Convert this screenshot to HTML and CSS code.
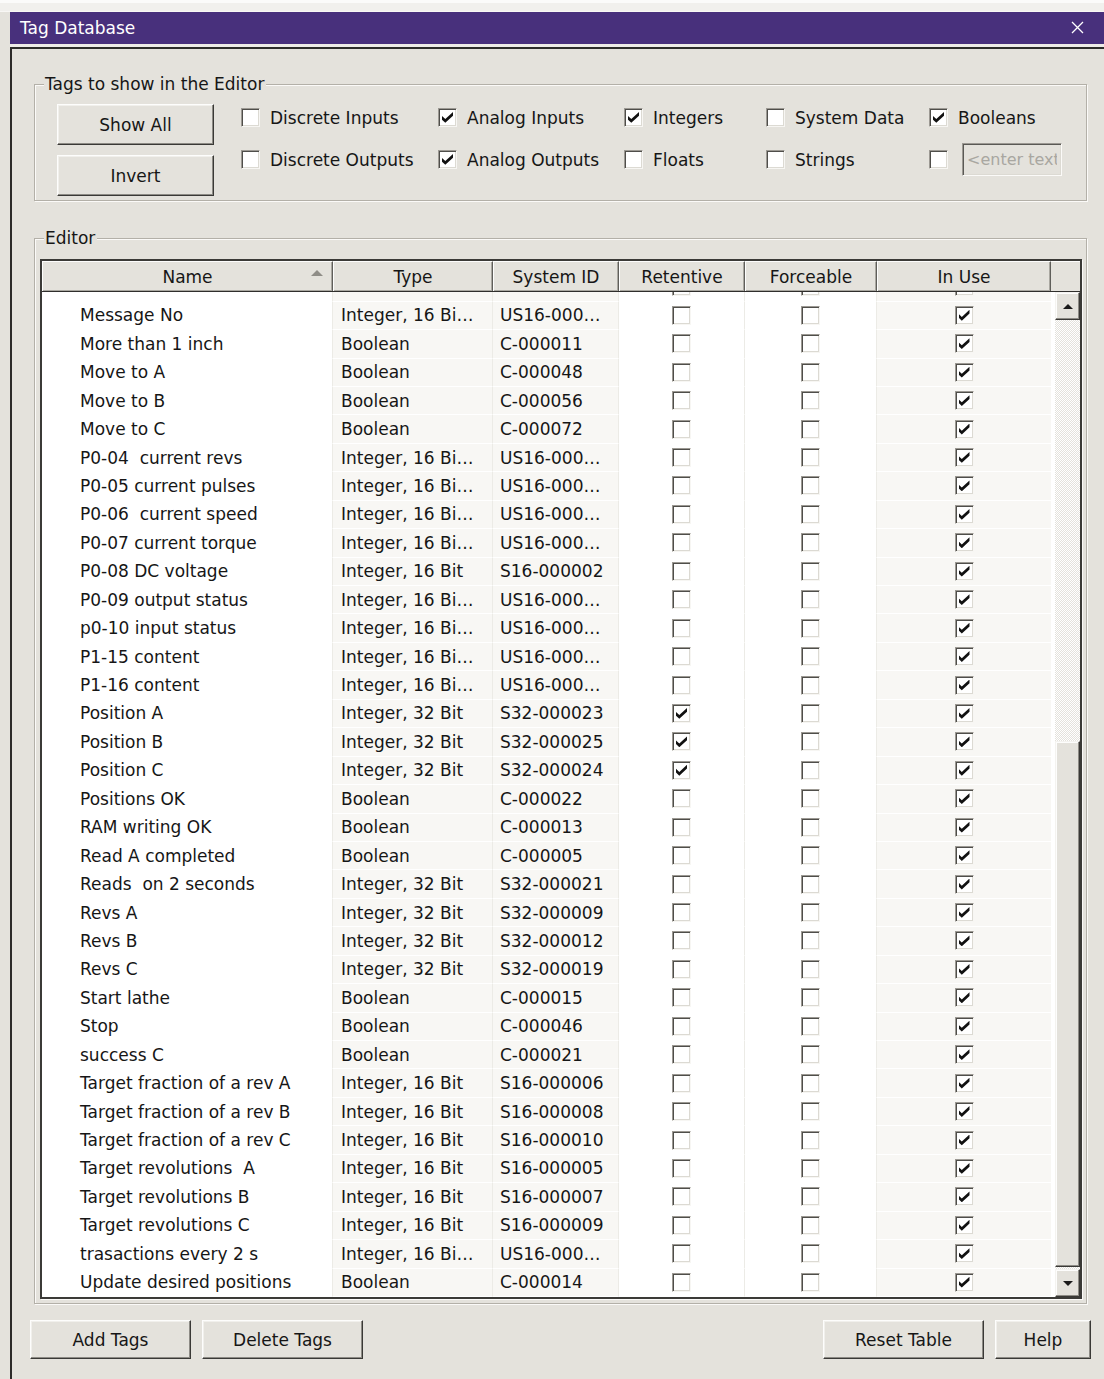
FILE: index.html
```html
<!DOCTYPE html>
<html lang="en">
<head>
<meta charset="utf-8">
<title>Tag Database</title>
<link rel="stylesheet" href="styles.css">
</head>
<body>
<div class="top-strip"></div>
<div class="window">
  <div class="titlebar">
    <span class="title">Tag Database</span>
    <svg class="close" width="13" height="13" viewBox="0 0 13 13"><path d="M1 1 L12 12 M12 1 L1 12" stroke="#fff" stroke-width="1.3" fill="none"/></svg>
  </div>
  <div class="client">
    <fieldset class="group tags">
      <legend>Tags to show in the Editor</legend>
      <div class="tags-body">
        <div class="btn-col">
          <button class="btn wide">Show All</button>
          <button class="btn wide">Invert</button>
        </div>
        <div class="check-grid">
          <label class="chk"><i class="cb"></i>Discrete Inputs</label>
          <label class="chk"><i class="cb on"></i>Analog Inputs</label>
          <label class="chk"><i class="cb on"></i>Integers</label>
          <label class="chk"><i class="cb"></i>System Data</label>
          <label class="chk"><i class="cb on"></i>Booleans</label>
          <label class="chk"><i class="cb"></i>Discrete Outputs</label>
          <label class="chk"><i class="cb on"></i>Analog Outputs</label>
          <label class="chk"><i class="cb"></i>Floats</label>
          <label class="chk"><i class="cb"></i>Strings</label>
          <label class="chk"><i class="cb"></i><input class="filter" type="text" placeholder="&lt;enter text&gt;"></label>
        </div>
      </div>
    </fieldset>

    <fieldset class="group editor">
      <legend>Editor</legend>
      <div class="grid">
        <div class="grid-head">
          <div class="hc sorted">Name<span class="sort-arrow"></span></div>
          <div class="hc">Type</div>
          <div class="hc">System ID</div>
          <div class="hc">Retentive</div>
          <div class="hc">Forceable</div>
          <div class="hc">In Use</div>
          <div class="hc filler"></div>
        </div>
        <div class="grid-body">
          <div class="rows">
            <div class="row"><span class="c name"></span><span class="c type"></span><span class="c sid"></span><span class="c ret"><i class="cb"></i></span><span class="c frc"><i class="cb"></i></span><span class="c use"><i class="cb on"></i></span></div>
            <div class="row"><span class="c name">Message No</span><span class="c type">Integer, 16 Bi…</span><span class="c sid">US16-000…</span><span class="c ret"><i class="cb"></i></span><span class="c frc"><i class="cb"></i></span><span class="c use"><i class="cb on"></i></span></div>
            <div class="row"><span class="c name">More than 1 inch</span><span class="c type">Boolean</span><span class="c sid">C-000011</span><span class="c ret"><i class="cb"></i></span><span class="c frc"><i class="cb"></i></span><span class="c use"><i class="cb on"></i></span></div>
            <div class="row"><span class="c name">Move to A</span><span class="c type">Boolean</span><span class="c sid">C-000048</span><span class="c ret"><i class="cb"></i></span><span class="c frc"><i class="cb"></i></span><span class="c use"><i class="cb on"></i></span></div>
            <div class="row"><span class="c name">Move to B</span><span class="c type">Boolean</span><span class="c sid">C-000056</span><span class="c ret"><i class="cb"></i></span><span class="c frc"><i class="cb"></i></span><span class="c use"><i class="cb on"></i></span></div>
            <div class="row"><span class="c name">Move to C</span><span class="c type">Boolean</span><span class="c sid">C-000072</span><span class="c ret"><i class="cb"></i></span><span class="c frc"><i class="cb"></i></span><span class="c use"><i class="cb on"></i></span></div>
            <div class="row"><span class="c name">P0-04  current revs</span><span class="c type">Integer, 16 Bi…</span><span class="c sid">US16-000…</span><span class="c ret"><i class="cb"></i></span><span class="c frc"><i class="cb"></i></span><span class="c use"><i class="cb on"></i></span></div>
            <div class="row"><span class="c name">P0-05 current pulses</span><span class="c type">Integer, 16 Bi…</span><span class="c sid">US16-000…</span><span class="c ret"><i class="cb"></i></span><span class="c frc"><i class="cb"></i></span><span class="c use"><i class="cb on"></i></span></div>
            <div class="row"><span class="c name">P0-06  current speed</span><span class="c type">Integer, 16 Bi…</span><span class="c sid">US16-000…</span><span class="c ret"><i class="cb"></i></span><span class="c frc"><i class="cb"></i></span><span class="c use"><i class="cb on"></i></span></div>
            <div class="row"><span class="c name">P0-07 current torque</span><span class="c type">Integer, 16 Bi…</span><span class="c sid">US16-000…</span><span class="c ret"><i class="cb"></i></span><span class="c frc"><i class="cb"></i></span><span class="c use"><i class="cb on"></i></span></div>
            <div class="row"><span class="c name">P0-08 DC voltage</span><span class="c type">Integer, 16 Bit</span><span class="c sid">S16-000002</span><span class="c ret"><i class="cb"></i></span><span class="c frc"><i class="cb"></i></span><span class="c use"><i class="cb on"></i></span></div>
            <div class="row"><span class="c name">P0-09 output status</span><span class="c type">Integer, 16 Bi…</span><span class="c sid">US16-000…</span><span class="c ret"><i class="cb"></i></span><span class="c frc"><i class="cb"></i></span><span class="c use"><i class="cb on"></i></span></div>
            <div class="row"><span class="c name">p0-10 input status</span><span class="c type">Integer, 16 Bi…</span><span class="c sid">US16-000…</span><span class="c ret"><i class="cb"></i></span><span class="c frc"><i class="cb"></i></span><span class="c use"><i class="cb on"></i></span></div>
            <div class="row"><span class="c name">P1-15 content</span><span class="c type">Integer, 16 Bi…</span><span class="c sid">US16-000…</span><span class="c ret"><i class="cb"></i></span><span class="c frc"><i class="cb"></i></span><span class="c use"><i class="cb on"></i></span></div>
            <div class="row"><span class="c name">P1-16 content</span><span class="c type">Integer, 16 Bi…</span><span class="c sid">US16-000…</span><span class="c ret"><i class="cb"></i></span><span class="c frc"><i class="cb"></i></span><span class="c use"><i class="cb on"></i></span></div>
            <div class="row"><span class="c name">Position A</span><span class="c type">Integer, 32 Bit</span><span class="c sid">S32-000023</span><span class="c ret"><i class="cb on"></i></span><span class="c frc"><i class="cb"></i></span><span class="c use"><i class="cb on"></i></span></div>
            <div class="row"><span class="c name">Position B</span><span class="c type">Integer, 32 Bit</span><span class="c sid">S32-000025</span><span class="c ret"><i class="cb on"></i></span><span class="c frc"><i class="cb"></i></span><span class="c use"><i class="cb on"></i></span></div>
            <div class="row"><span class="c name">Position C</span><span class="c type">Integer, 32 Bit</span><span class="c sid">S32-000024</span><span class="c ret"><i class="cb on"></i></span><span class="c frc"><i class="cb"></i></span><span class="c use"><i class="cb on"></i></span></div>
            <div class="row"><span class="c name">Positions OK</span><span class="c type">Boolean</span><span class="c sid">C-000022</span><span class="c ret"><i class="cb"></i></span><span class="c frc"><i class="cb"></i></span><span class="c use"><i class="cb on"></i></span></div>
            <div class="row"><span class="c name">RAM writing OK</span><span class="c type">Boolean</span><span class="c sid">C-000013</span><span class="c ret"><i class="cb"></i></span><span class="c frc"><i class="cb"></i></span><span class="c use"><i class="cb on"></i></span></div>
            <div class="row"><span class="c name">Read A completed</span><span class="c type">Boolean</span><span class="c sid">C-000005</span><span class="c ret"><i class="cb"></i></span><span class="c frc"><i class="cb"></i></span><span class="c use"><i class="cb on"></i></span></div>
            <div class="row"><span class="c name">Reads  on 2 seconds</span><span class="c type">Integer, 32 Bit</span><span class="c sid">S32-000021</span><span class="c ret"><i class="cb"></i></span><span class="c frc"><i class="cb"></i></span><span class="c use"><i class="cb on"></i></span></div>
            <div class="row"><span class="c name">Revs A</span><span class="c type">Integer, 32 Bit</span><span class="c sid">S32-000009</span><span class="c ret"><i class="cb"></i></span><span class="c frc"><i class="cb"></i></span><span class="c use"><i class="cb on"></i></span></div>
            <div class="row"><span class="c name">Revs B</span><span class="c type">Integer, 32 Bit</span><span class="c sid">S32-000012</span><span class="c ret"><i class="cb"></i></span><span class="c frc"><i class="cb"></i></span><span class="c use"><i class="cb on"></i></span></div>
            <div class="row"><span class="c name">Revs C</span><span class="c type">Integer, 32 Bit</span><span class="c sid">S32-000019</span><span class="c ret"><i class="cb"></i></span><span class="c frc"><i class="cb"></i></span><span class="c use"><i class="cb on"></i></span></div>
            <div class="row"><span class="c name">Start lathe</span><span class="c type">Boolean</span><span class="c sid">C-000015</span><span class="c ret"><i class="cb"></i></span><span class="c frc"><i class="cb"></i></span><span class="c use"><i class="cb on"></i></span></div>
            <div class="row"><span class="c name">Stop</span><span class="c type">Boolean</span><span class="c sid">C-000046</span><span class="c ret"><i class="cb"></i></span><span class="c frc"><i class="cb"></i></span><span class="c use"><i class="cb on"></i></span></div>
            <div class="row"><span class="c name">success C</span><span class="c type">Boolean</span><span class="c sid">C-000021</span><span class="c ret"><i class="cb"></i></span><span class="c frc"><i class="cb"></i></span><span class="c use"><i class="cb on"></i></span></div>
            <div class="row"><span class="c name">Target fraction of a rev A</span><span class="c type">Integer, 16 Bit</span><span class="c sid">S16-000006</span><span class="c ret"><i class="cb"></i></span><span class="c frc"><i class="cb"></i></span><span class="c use"><i class="cb on"></i></span></div>
            <div class="row"><span class="c name">Target fraction of a rev B</span><span class="c type">Integer, 16 Bit</span><span class="c sid">S16-000008</span><span class="c ret"><i class="cb"></i></span><span class="c frc"><i class="cb"></i></span><span class="c use"><i class="cb on"></i></span></div>
            <div class="row"><span class="c name">Target fraction of a rev C</span><span class="c type">Integer, 16 Bit</span><span class="c sid">S16-000010</span><span class="c ret"><i class="cb"></i></span><span class="c frc"><i class="cb"></i></span><span class="c use"><i class="cb on"></i></span></div>
            <div class="row"><span class="c name">Target revolutions  A</span><span class="c type">Integer, 16 Bit</span><span class="c sid">S16-000005</span><span class="c ret"><i class="cb"></i></span><span class="c frc"><i class="cb"></i></span><span class="c use"><i class="cb on"></i></span></div>
            <div class="row"><span class="c name">Target revolutions B</span><span class="c type">Integer, 16 Bit</span><span class="c sid">S16-000007</span><span class="c ret"><i class="cb"></i></span><span class="c frc"><i class="cb"></i></span><span class="c use"><i class="cb on"></i></span></div>
            <div class="row"><span class="c name">Target revolutions C</span><span class="c type">Integer, 16 Bit</span><span class="c sid">S16-000009</span><span class="c ret"><i class="cb"></i></span><span class="c frc"><i class="cb"></i></span><span class="c use"><i class="cb on"></i></span></div>
            <div class="row"><span class="c name">trasactions every 2 s</span><span class="c type">Integer, 16 Bi…</span><span class="c sid">US16-000…</span><span class="c ret"><i class="cb"></i></span><span class="c frc"><i class="cb"></i></span><span class="c use"><i class="cb on"></i></span></div>
            <div class="row"><span class="c name">Update desired positions</span><span class="c type">Boolean</span><span class="c sid">C-000014</span><span class="c ret"><i class="cb"></i></span><span class="c frc"><i class="cb"></i></span><span class="c use"><i class="cb on"></i></span></div>
          </div>
          <div class="vscroll">
            <div class="sb-btn"><span class="arrow up"></span></div>
            <div class="sb-track top"></div>
            <div class="sb-thumb"></div>
            <div class="sb-track bottom"></div>
            <div class="sb-btn"><span class="arrow down"></span></div>
          </div>
        </div>
      </div>
    </fieldset>

    <div class="footer">
      <div class="btn-row">
        <button class="btn mid">Add Tags</button>
        <button class="btn mid">Delete Tags</button>
      </div>
      <div class="btn-row">
        <button class="btn mid">Reset Table</button>
        <button class="btn small">Help</button>
      </div>
    </div>
  </div>
</div>
</body>
</html>
```

FILE: styles.css
```css
:root {
  --face: #e4e2dc;
  --dark: #3b3a37;
  --row: 28.44px;
}

* { box-sizing: border-box; }

html, body {
  margin: 0;
  height: 100%;
  overflow: hidden;
}

body {
  background: var(--face);
  font-family: "DejaVu Sans", sans-serif;
  font-size: 17px;
  color: #161616;
}

/* strip of desktop above the window */
.top-strip {
  height: 12px;
  background: #f1f0ed;
  border-top: 3px solid #fbfbfa;
  border-bottom: 1px solid #f8f7f5;
}

.window {
  margin-left: 10px;
  height: calc(100% - 12px);
  display: flex;
  flex-direction: column;
}

.titlebar {
  height: 35px;
  background: #48307c;
  border-bottom: 3px solid #eeece8;
  display: flex;
  align-items: center;
  justify-content: space-between;
  padding: 0 20px 1px 10px;
  flex: none;
}

.title {
  color: #fff;
}

.close { display: block; }

.client {
  flex: 1;
  border-left: 2px solid #2c2b29;
  border-top: 2px solid #2c2b29;
  padding: 25px 17px 0 22px;
}

/* group boxes */
.group {
  margin: 0;
  padding: 0;
  border: 1px solid #b3b0a8;
  box-shadow: 1px 1px 0 #fbfaf8, inset 1px 1px 0 #fbfaf8;
  min-width: 0;
}

.group legend {
  padding: 0 2px 0 1px;
  line-height: 20px;
  background: var(--face);
}

.tags { padding: 10px 0 4px 0; }
.tags legend { margin-left: 9px; }

.tags-body {
  display: flex;
  align-items: flex-start;
  padding-left: 22px;
}

.btn-col {
  display: flex;
  flex-direction: column;
  gap: 10px;
}

.check-grid {
  margin-left: 27px;
  margin-top: -3px;
  display: grid;
  grid-template-columns: 197px 186px 142px 163px auto;
  grid-template-rows: 33px 33px;
  row-gap: 9px;
}

.chk {
  display: flex;
  align-items: center;
  gap: 10px;
  white-space: nowrap;
}

/* classic sunken check box */
.cb {
  position: relative;
  display: inline-block;
  width: 19px;
  height: 19px;
  flex: none;
  background: #fff;
  border: 1px solid;
  border-color: #9c9993 #f7f6f3 #f7f6f3 #9c9993;
  box-shadow: inset 1px 1px 0 #4f4e4a, inset -1px -1px 0 #dcdad3;
}

/* chunky tick in the classic style */
.cb.on::after {
  content: "";
  position: absolute;
  left: 3px;
  top: 3px;
  width: 11px;
  height: 11px;
  background: #111;
  clip-path: polygon(0 36%, 30% 64%, 100% 0, 100% 34%, 30% 98%, 0 70%);
}

.filter {
  width: 100px;
  height: 33px;
  margin-left: 4px;
  font: inherit;
  font-size: 16px;
  padding: 0 4px;
  background: var(--face);
  border: 1px solid;
  border-color: #9c9993 #fbfaf8 #fbfaf8 #9c9993;
  box-shadow: inset 1px 1px 0 #5a5955, inset -1px -1px 0 #dcdad3;
  outline: none;
  color: #161616;
}

.filter::placeholder { color: #a9a7a1; }

/* raised push buttons */
.btn {
  font: inherit;
  color: #161616;
  background: var(--face);
  border: 1px solid;
  border-color: #fdfdfc #3a3936 #3a3936 #fdfdfc;
  box-shadow: inset -1px -1px 0 #8d8b85, inset 1px 1px 0 #f1f0ec;
  padding: 0;
  height: 40px;
}

.btn.wide { width: 157px; height: 41px; }
.btn.mid { width: 161px; height: 39px; }
.btn.small { width: 96px; height: 39px; }

/* editor */
.editor {
  margin-top: 27px;
  padding: 11px 4px 4px 5px;
}

.editor legend { margin-left: 4px; }

.grid {
  border: 2px solid var(--dark);
  box-shadow: 1px 1px 0 #fbfaf8;
  background: #fff;
}

.grid-head {
  display: grid;
  grid-template-columns: 291px 160px 126px 126px 132px 174px 1fr;
  height: 31px;
  background: var(--face);
  border-bottom: 1px solid #2f2e2c;
}

.hc {
  position: relative;
  display: flex;
  align-items: center;
  justify-content: center;
  border-top: 1px solid #fdfdfc;
  border-left: 1px solid #fdfdfc;
  border-right: 1px solid #5f5e5a;
  box-shadow: inset -1px -1px 0 #a9a7a0;
}

.hc.filler {
  border: 0;
  box-shadow: none;
  border-top: 1px solid #fdfdfc;
}

.sort-arrow {
  position: absolute;
  right: 9px;
  top: 8px;
  width: 0;
  height: 0;
  border-left: 6px solid transparent;
  border-right: 6px solid transparent;
  border-bottom: 6px solid #8f8d87;
}

.grid-body {
  display: flex;
  height: 1005px;
}

.rows {
  width: 1011px;
  overflow: hidden;
  flex: none;
}

.row {
  display: grid;
  grid-template-columns: 291px 160px 126px 126px 132px 174px 2px;
  height: var(--row);
}

.row:first-child { margin-top: -18.8px; }

.c {
  display: flex;
  align-items: center;
  white-space: pre;
  overflow: hidden;
  border-right: 1px solid #ecebe6;
  border-bottom: 1px solid #fff;
  background: #fff;
}

.c.name { padding-left: 38px; }
.c.type { padding-left: 8px; background: #f8f7f4; }
.c.sid { padding-left: 7px; background: #f8f7f4; }
.c.ret, .c.frc { justify-content: center; }
.c.use { justify-content: center; background: #f8f7f4; border-right: 0; }

/* vertical scroll bar */
.vscroll {
  width: 27px;
  margin-left: 2px;
  display: flex;
  flex-direction: column;
}

.sb-btn, .sb-thumb {
  background: var(--face);
  border: 1px solid;
  border-color: #f4f3f0 #3a3936 #3a3936 #f4f3f0;
  box-shadow: inset -1px -1px 0 #8d8b85, inset 1px 1px 0 #fdfdfc;
}

.sb-btn {
  height: 28px;
  display: flex;
  align-items: center;
  justify-content: center;
}

.sb-track {
  background: repeating-conic-gradient(#ffffff 0 25%, #e4e2dc 0 50%) 0 0 / 2px 2px;
}

.sb-track.top { height: 421px; }
.sb-track.bottom { height: 2px; }
.sb-thumb { height: 526px; }

.arrow {
  width: 0;
  height: 0;
  border-left: 5px solid transparent;
  border-right: 5px solid transparent;
}

.arrow.up { border-bottom: 5px solid #1a1a1a; }
.arrow.down { border-top: 5px solid #1a1a1a; }

/* bottom buttons */
.footer {
  display: flex;
  justify-content: space-between;
  margin: 16px -4px 0 -4px;
}

.btn-row {
  display: flex;
  gap: 11px;
}
```
